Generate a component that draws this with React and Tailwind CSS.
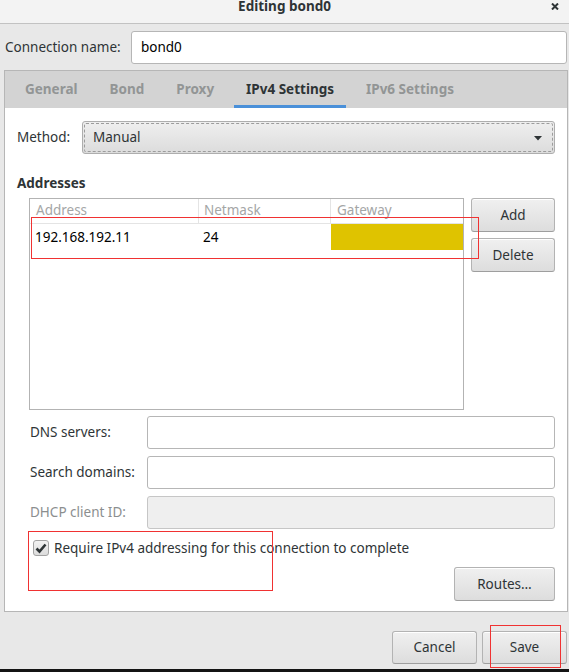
const Btn = ({ children, className }) => {
    return (
        <div className={"flex items-center justify-center rounded-[3px] border border-[#b3b3b3] border-b-[#9e9e9e] bg-linear-to-b from-[#f0f0f0] to-[#dddddd] text-[#2e3436] shadow-[inset_0_1px_0_#ffffff] " + className}>
            {children}
        </div>
    );
};

const Entry = ({ children, disabled }) => {
    return (
        <div className={disabled
            ? "w-[408px] h-[33px] rounded-[3px] border border-[#c6c6c6] bg-[#efefef]"
            : "w-[408px] h-[33px] rounded-[3px] border border-[#b6b6b6] bg-white"}>
            {children}
        </div>
    );
};

const App = () => {
    return (
        <div className="relative w-[569px] h-[672px] overflow-hidden bg-[#e8e8e8] font-['Noto_Sans',sans-serif] text-[13.5px] text-[#2e3436]">

            {/* title bar */}
            <div className="relative h-[24px] border-b border-[#c2c2c2] bg-[#f3f3f3] flex justify-center">
                <span className="font-bold leading-[13px]">Editing bond0</span>
                <svg className="absolute left-[551px] top-[3px]" width="8" height="7" viewBox="0 0 8 7">
                    <path d="M1 0.5 L7 6.5 M7 0.5 L1 6.5" stroke="#2e3436" strokeWidth="2" />
                </svg>
            </div>

            {/* connection name */}
            <div className="h-[46px] pt-[7px] pl-[5px] pr-[2px] flex justify-between">
                <span className="leading-[33px]">Connection name:</span>
                <div className="w-[436px] h-[33px] rounded-[3px] border border-[#b6b6b6] bg-white pl-[9px] leading-[31px] text-black">bond0</div>
            </div>

            {/* notebook */}
            <div className="ml-[4px] w-[564px] h-[542px] border border-[#b6b6b6] flex flex-col">
                <div className="h-[37px] bg-[#d3d3d3] flex gap-[8px] pl-[8px] font-bold text-[#929595]">
                    <div className="px-[12px] flex items-center border-b-[3px] border-transparent pt-[3px]">General</div>
                    <div className="px-[12px] flex items-center border-b-[3px] border-transparent pt-[3px]">Bond</div>
                    <div className="px-[12px] flex items-center border-b-[3px] border-transparent pt-[3px]">Proxy</div>
                    <div className="px-[12px] flex items-center border-b-[3px] border-[#4a90d9] pt-[3px] text-[#2e3436]">IPv4 Settings</div>
                    <div className="px-[12px] flex items-center border-b-[3px] border-transparent pt-[3px]">IPv6 Settings</div>
                </div>

                <div className="flex-1 bg-white pt-[13px] px-[12px]">
                    <div className="flex items-center justify-between">
                        <span>Method:</span>
                        <div className="relative w-[473px] h-[33px] rounded-[3px] border border-[#aeaeae] bg-linear-to-b from-[#efefef] to-[#dcdcdc] flex items-center pl-[10px]">
                            <div className="absolute inset-[1px] rounded-[2px] border border-dashed border-[#9c9c9c]" />
                            <span>Manual</span>
                            <svg className="absolute right-[12px] top-[14px]" width="8" height="5" viewBox="0 0 8 5">
                                <path d="M0 0 L8 0 L4 4.5 Z" fill="#2e3436" />
                            </svg>
                        </div>
                    </div>

                    <div className="mt-[20px] h-[18px] leading-[18px] font-bold">Addresses</div>

                    <div className="mt-[6px] ml-[12px] flex gap-[7px]">
                        <div className="w-[435px] h-[212px] border border-[#b3b3b3] bg-white flex flex-col">
                            <div className="flex h-[25px] border-b border-[#e4e4e4] text-[#a4a6a6] leading-[22px]">
                                <div className="w-[169px] border-r border-[#e4e4e4] pl-[6px]">Address</div>
                                <div className="w-[132px] border-r border-[#e4e4e4] pl-[5px]">Netmask</div>
                                <div className="flex-1 pl-[6px]">Gateway</div>
                            </div>
                            <div className="flex h-[26px] leading-[26px] text-black">
                                <div className="w-[169px] pl-[5px]">192.168.192.11</div>
                                <div className="w-[132px] pl-[4px]">24</div>
                                <div className="flex-1 bg-[#dfc300]" />
                            </div>
                        </div>
                        <div className="flex-1 flex flex-col gap-[6px]">
                            <Btn className="h-[34px]">Add</Btn>
                            <Btn className="h-[34px]">Delete</Btn>
                        </div>
                    </div>

                    <div className="mt-[6px] ml-[13px] flex flex-col gap-[7px]">
                        <div className="flex items-center justify-between">
                            <span>DNS servers:</span>
                            <Entry />
                        </div>
                        <div className="flex items-center justify-between">
                            <span>Search domains:</span>
                            <Entry />
                        </div>
                        <div className="flex items-center justify-between">
                            <span className="text-[#8b8e8f]">DHCP client ID:</span>
                            <Entry disabled />
                        </div>
                    </div>

                    <div className="mt-[11px] ml-[16px] h-[16px] flex items-center gap-[5px]">
                        <div className="w-[16px] h-[16px] rounded-[3px] border border-[#a3a3a3] bg-linear-to-b from-[#f2f2f2] to-[#dcdcdc] flex items-center justify-center">
                            <svg width="14" height="14" viewBox="0 0 14 14">
                                <path d="M2.5 7.5 L5.5 10.5 L11.5 3.5" stroke="#2e3436" strokeWidth="2.6" fill="none" />
                            </svg>
                        </div>
                        <span>Require IPv4 addressing for this connection to complete</span>
                    </div>

                    <div className="mt-[11px] flex justify-end">
                        <Btn className="w-[101px] h-[34px]">Routes…</Btn>
                    </div>
                </div>
            </div>

            {/* dialog buttons */}
            <div className="h-[57px] pt-[19px] pr-[2px] flex justify-end gap-[5px]">
                <Btn className="w-[85px] h-[33px]">Cancel</Btn>
                <Btn className="w-[85px] h-[33px]">Save</Btn>
            </div>
            <div className="h-[3px] bg-[#141414]" />

            {/* red annotation boxes */}
            <div className="absolute left-[31px] top-[217px] w-[448px] h-[42px] border border-[#f03232]" />
            <div className="absolute left-[28px] top-[531px] w-[245px] h-[60px] border border-[#f03232]" />
            <div className="absolute left-[490px] top-[625px] w-[71px] h-[43px] border border-[#f03232]" />
        </div>
    );
};

export default App;
